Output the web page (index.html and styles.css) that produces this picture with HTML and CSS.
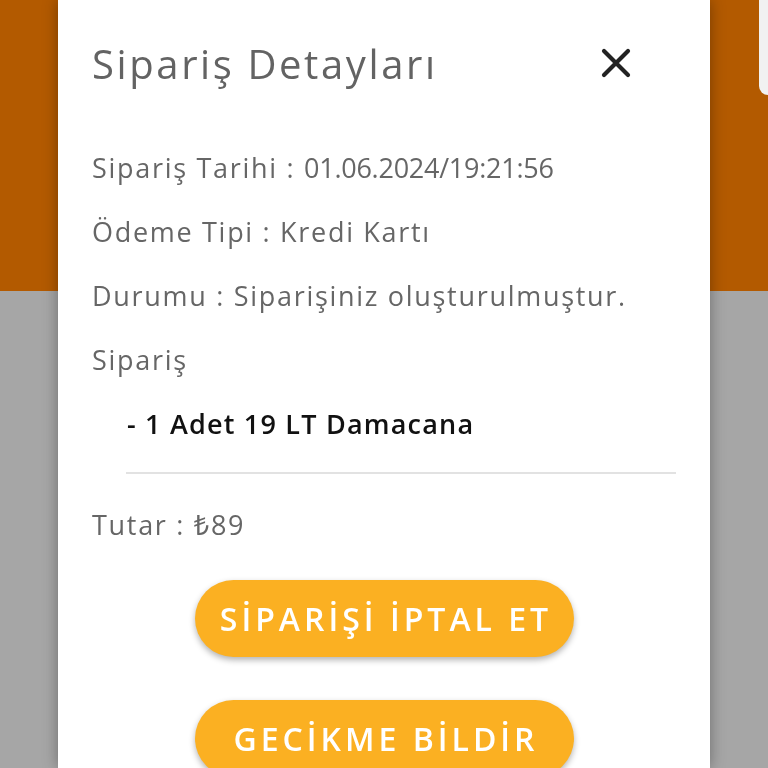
FILE: index.html
```html
<!DOCTYPE html>
<html lang="tr">
<head>
<meta charset="utf-8">
<link rel="stylesheet" href="styles.css">
</head>
<body>
<div class="page">
  <header class="header">
    <div class="corner-card"></div>
  </header>
  <main class="content"></main>
</div>
<div class="modal">
  <div class="modal-head">
    <h1 class="title">Sipariş Detayları</h1>
    <button class="close" aria-label="Kapat">
      <svg width="30" height="30" viewBox="0 0 30 30"><path d="M3 3 L27 27 M27 3 L3 27" stroke="#222" stroke-width="4.2" stroke-linecap="round" fill="none"/></svg>
    </button>
  </div>
  <div class="info">
    <p class="line">Sipariş Tarihi : <span class="num">01.06.2024/19:21:56</span></p>
    <p class="line">Ödeme Tipi : Kredi Kartı</p>
    <p class="line">Durumu : Siparişiniz oluşturulmuştur.</p>
    <p class="line">Sipariş</p>
    <p class="item">- 1 Adet 19 LT Damacana</p>
    <hr class="divider">
    <p class="line total">Tutar : ₺89</p>
  </div>
  <div class="actions">
    <button class="btn">SİPARİŞİ İPTAL ET</button>
    <button class="btn">GECİKME BİLDİR</button>
  </div>
</div>
</body>
</html>
```
FILE: styles.css
```css
html, body {
  margin: 0;
  padding: 0;
  width: 768px;
  height: 768px;
  overflow: hidden;
  font-family: "Open Sans", "Noto Sans", sans-serif;
}
.page {
  display: flex;
  flex-direction: column;
  height: 768px;
}
.header {
  height: 291px;
  background: #b35a00;
  position: relative;
  overflow: hidden;
}
.corner-card {
  position: absolute;
  left: 759px;
  top: -20px;
  width: 9px;
  height: 115px;
  background: #f1f1f1;
  border-radius: 14px 0 0 14px;
}
.content {
  flex: 1;
  background: #a6a6a6;
}
.modal {
  position: fixed;
  left: 58px;
  top: 0;
  width: 652px;
  height: 768px;
  overflow: hidden;
  background: #fff;
  box-shadow: 0 0 14px rgba(0,0,0,0.35);
  box-sizing: border-box;
  padding: 37px 0 0 34px;
  display: flex;
  flex-direction: column;
}
.modal-head {
  display: flex;
  align-items: center;
  justify-content: space-between;
  padding-right: 79px;
  height: 52px;
}
.title {
  margin: 0;
  font-weight: 400;
  font-size: 40px;
  color: #636363;
  letter-spacing: 2.6px;
}
.close {
  border: 0;
  background: none;
  padding: 0;
  width: 30px;
  height: 30px;
  display: flex;
}
.info {
  padding-top: 46px;
  padding-right: 34px;
}
.line {
  margin: 0;
  height: 64px;
  display: flex;
  align-items: center;
  white-space: pre;
  font-size: 27px;
  letter-spacing: 1.7px;
  color: #666;
}
.num {
  letter-spacing: -0.25px;
}
.item {
  margin: 0;
  height: 64px;
  display: flex;
  align-items: center;
  padding-left: 35px;
  font-size: 27px;
  font-weight: 600;
  letter-spacing: 1.2px;
  color: #111;
}
.divider {
  margin: 17px 0 14px 34px;
  border: 0;
  height: 2px;
  background: #e2e2e2;
}
.total {
  height: 72px;
}
.actions {
  display: flex;
  flex-direction: column;
  align-items: center;
  gap: 43px;
  padding-top: 20px;
  padding-right: 34px;
}
.btn {
  flex: none;
  width: 379px;
  height: 77px;
  border: 0;
  border-radius: 40px;
  background: #fbb022;
  color: #fff;
  font-family: "Open Sans", sans-serif;
  font-size: 32px;
  font-weight: 600;
  letter-spacing: 4px;
  text-indent: 4px;
  box-shadow: 0 3px 6px rgba(0,0,0,0.3);
}
```
